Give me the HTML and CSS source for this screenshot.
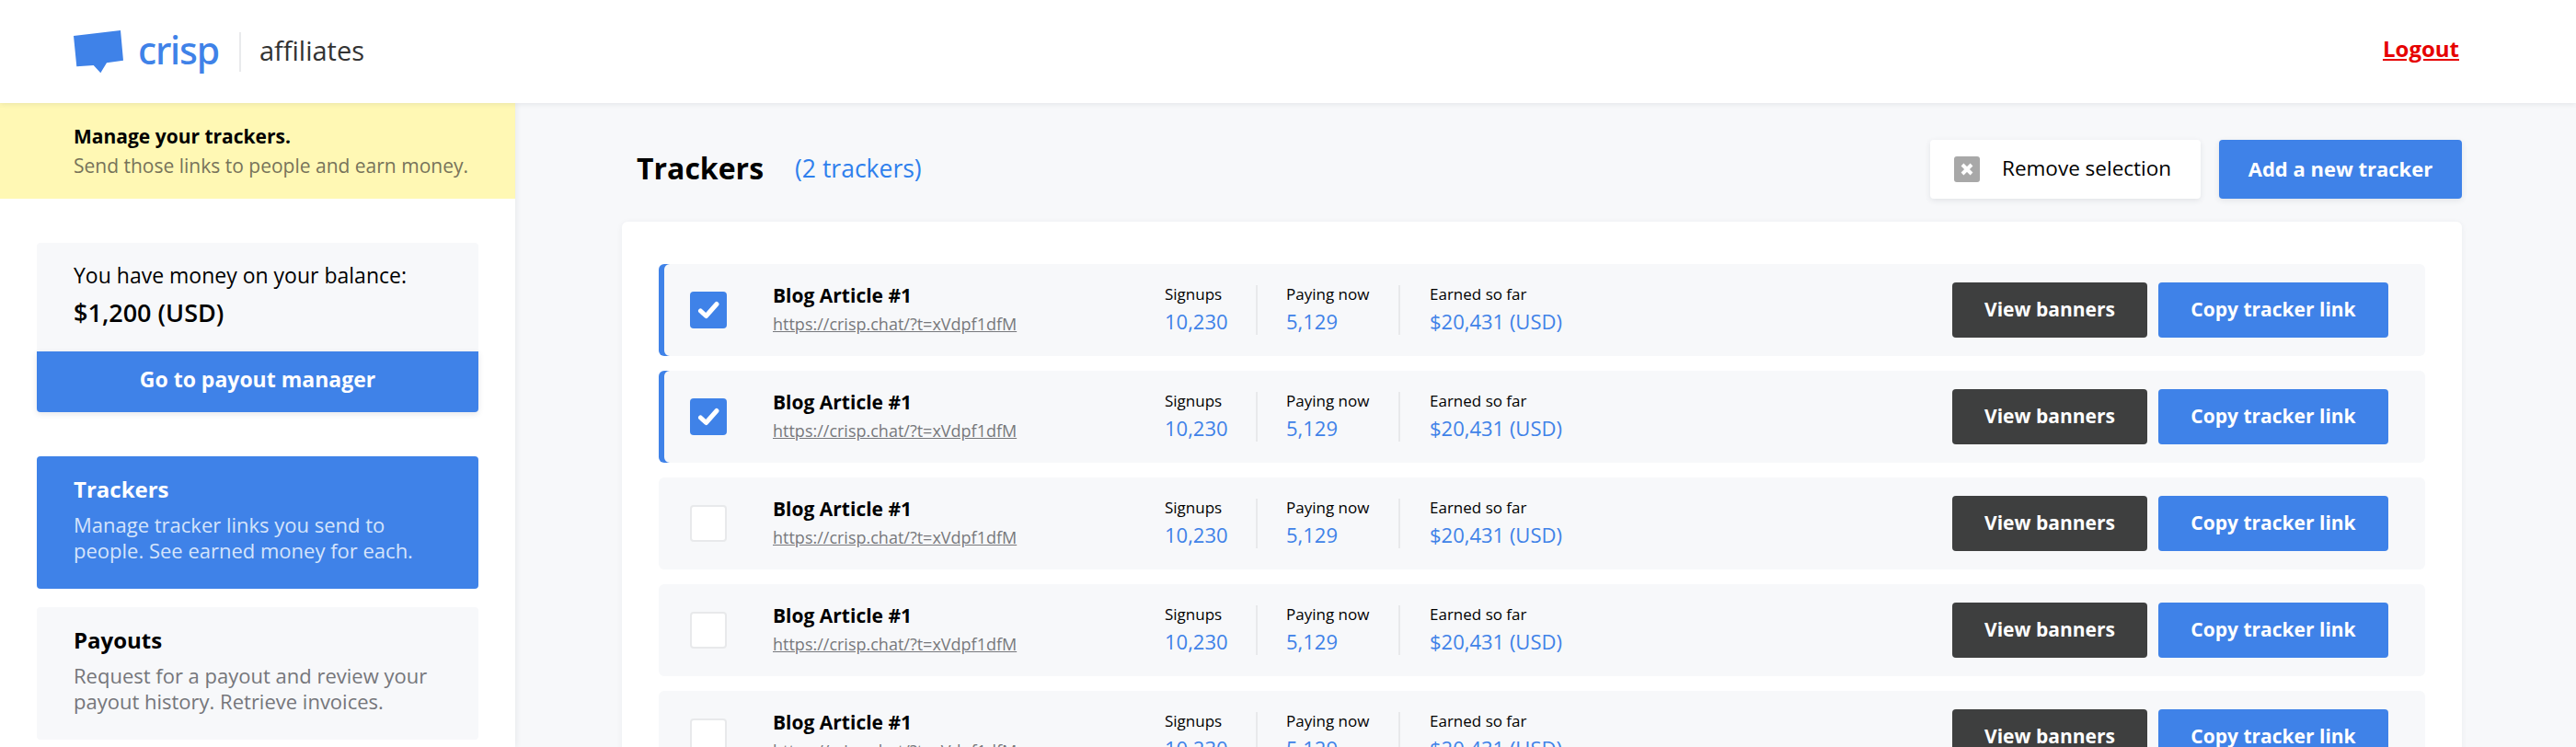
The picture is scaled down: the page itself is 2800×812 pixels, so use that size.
FILE: index.html
```html
<!DOCTYPE html>
<html lang="en">
<head>
<meta charset="utf-8">
<title>Crisp affiliates</title>
<link rel="stylesheet" href="styles.css">
</head>
<body>
<header class="topbar">
  <svg class="logo-mark" viewBox="0 0 54 48" aria-hidden="true"><path d="M0 7 51 1 54 33.7 36 36.300 29.300 47.300 21.700 39 3.300 40.300Z"/></svg>
  <span class="logo-word">crisp</span>
  <span class="logo-sep"></span>
  <span class="logo-sub">affiliates</span>
  <a class="logout" href="#">Logout</a>
</header>
<div class="layout">
  <aside class="sidebar">
    <div class="notice">
      <p class="notice-title">Manage your trackers.</p>
      <p class="notice-text">Send those links to people and earn money.</p>
    </div>
    <div class="side-body">
      <div class="balance">
        <p class="balance-label">You have money on your balance:</p>
        <p class="balance-value">$1,200 (USD)</p>
      </div>
      <a class="balance-btn" href="#">Go to payout manager</a>
      <nav class="side-nav">
        <a class="nav-item active" href="#">
          <span class="nav-title">Trackers</span>
          <span class="nav-text">Manage tracker links you send to people. See earned money for each.</span>
        </a>
        <a class="nav-item" href="#">
          <span class="nav-title">Payouts</span>
          <span class="nav-text">Request for a payout and review your payout history. Retrieve invoices.</span>
        </a>
      </nav>
    </div>
  </aside>
  <main class="main">
    <div class="page-head">
      <h1 class="page-title">Trackers</h1>
      <span class="page-count">(2 trackers)</span>
      <div class="page-actions">
        <button class="btn btn-white"><svg class="x-icon" viewBox="0 0 28 28" aria-hidden="true"><rect width="28" height="28" rx="3"/><path d="M9 9 19 19M19 9 9 19"/></svg>Remove selection</button>
        <button class="btn btn-blue btn-add">Add a new tracker</button>
      </div>
    </div>
    <section class="panel">
      <article class="row selected">
        <span class="check on"><svg viewBox="0 0 40 40" aria-hidden="true"><path d="M11.500 21 17.500 26.500 29 13.500"/></svg></span>
        <div class="name"><div class="name-title">Blog Article #1</div><a class="name-link" href="#">https://crisp.chat/?t=xVdpf1dfM</a></div>
        <div class="stat s1"><div class="stat-label">Signups</div><div class="stat-value">10,230</div></div>
        <div class="stat s2"><div class="stat-label">Paying now</div><div class="stat-value">5,129</div></div>
        <div class="stat s3"><div class="stat-label">Earned so far</div><div class="stat-value">$20,431 (USD)</div></div>
        <div class="actions"><button class="btn btn-dark">View banners</button><button class="btn btn-blue btn-copy">Copy tracker link</button></div>
      </article>
      <article class="row selected">
        <span class="check on"><svg viewBox="0 0 40 40" aria-hidden="true"><path d="M11.500 21 17.500 26.500 29 13.500"/></svg></span>
        <div class="name"><div class="name-title">Blog Article #1</div><a class="name-link" href="#">https://crisp.chat/?t=xVdpf1dfM</a></div>
        <div class="stat s1"><div class="stat-label">Signups</div><div class="stat-value">10,230</div></div>
        <div class="stat s2"><div class="stat-label">Paying now</div><div class="stat-value">5,129</div></div>
        <div class="stat s3"><div class="stat-label">Earned so far</div><div class="stat-value">$20,431 (USD)</div></div>
        <div class="actions"><button class="btn btn-dark">View banners</button><button class="btn btn-blue btn-copy">Copy tracker link</button></div>
      </article>
      <article class="row">
        <span class="check"></span>
        <div class="name"><div class="name-title">Blog Article #1</div><a class="name-link" href="#">https://crisp.chat/?t=xVdpf1dfM</a></div>
        <div class="stat s1"><div class="stat-label">Signups</div><div class="stat-value">10,230</div></div>
        <div class="stat s2"><div class="stat-label">Paying now</div><div class="stat-value">5,129</div></div>
        <div class="stat s3"><div class="stat-label">Earned so far</div><div class="stat-value">$20,431 (USD)</div></div>
        <div class="actions"><button class="btn btn-dark">View banners</button><button class="btn btn-blue btn-copy">Copy tracker link</button></div>
      </article>
      <article class="row">
        <span class="check"></span>
        <div class="name"><div class="name-title">Blog Article #1</div><a class="name-link" href="#">https://crisp.chat/?t=xVdpf1dfM</a></div>
        <div class="stat s1"><div class="stat-label">Signups</div><div class="stat-value">10,230</div></div>
        <div class="stat s2"><div class="stat-label">Paying now</div><div class="stat-value">5,129</div></div>
        <div class="stat s3"><div class="stat-label">Earned so far</div><div class="stat-value">$20,431 (USD)</div></div>
        <div class="actions"><button class="btn btn-dark">View banners</button><button class="btn btn-blue btn-copy">Copy tracker link</button></div>
      </article>
      <article class="row">
        <span class="check"></span>
        <div class="name"><div class="name-title">Blog Article #1</div><a class="name-link" href="#">https://crisp.chat/?t=xVdpf1dfM</a></div>
        <div class="stat s1"><div class="stat-label">Signups</div><div class="stat-value">10,230</div></div>
        <div class="stat s2"><div class="stat-label">Paying now</div><div class="stat-value">5,129</div></div>
        <div class="stat s3"><div class="stat-label">Earned so far</div><div class="stat-value">$20,431 (USD)</div></div>
        <div class="actions"><button class="btn btn-dark">View banners</button><button class="btn btn-blue btn-copy">Copy tracker link</button></div>
      </article>
    </section>
  </main>
</div>
</body>
</html>
```
FILE: styles.css
```css
* { box-sizing: border-box; }
html, body { margin: 0; height: 812px; overflow: hidden; }
body { font-family: "Open Sans", "Noto Sans", sans-serif; background: #f7f8fa; color: #000; }
p, h1 { margin: 0; }
a { color: inherit; text-decoration: none; }

.topbar { position: relative; z-index: 2; height: 112px; background: #fff; display: flex; align-items: center; padding: 0 127px 0 80px; box-shadow: 0 1px 6px rgba(40, 50, 70, .1); }
.logo-mark { flex: none; width: 54px; height: 48px; fill: #3f82e8; }
.logo-word { font-family: "Noto Sans", sans-serif; font-size: 41px; line-height: 56px; font-weight: 500; color: #3f82e8; margin-left: 16px; letter-spacing: -1.200px; margin-top: -4px; }
.logo-sep { width: 2px; height: 43px; background: #e9eaec; margin-left: 22px; }
.logo-sub { font-size: 29px; line-height: 36px; font-weight: 500; color: #333; margin-left: 20px; margin-top: -2px; }
.logout { margin-left: auto; font-size: 24px; line-height: 28px; font-weight: 700; color: #e60000; text-decoration: underline; margin-top: -6px; }

.layout { display: flex; height: 700px; }
.sidebar { position: relative; z-index: 1; flex: 0 0 560px; background: #fff; box-shadow: 1px 0 6px rgba(40, 50, 70, .08); }
.notice { height: 104px; background: #fff8b4; padding: 22px 0 0 80px; }
.notice-title { font-size: 21px; line-height: 28px; font-weight: 700; }
.notice-text { font-size: 21px; line-height: 28px; margin-top: 4px; color: #77735a; }

.side-body { padding: 48px 40px 0; }
.balance { height: 118px; background: #f7f8fa; border-radius: 4px 4px 0 0; padding: 23px 0 0 40px; }
.balance-label { font-size: 23px; line-height: 24px; }
.balance-value { font-size: 27px; line-height: 32px; font-weight: 600; margin-top: 13px; }
.balance-btn { display: block; height: 66px; background: #3f82e8; color: #fff; border-radius: 0 0 4px 4px; text-align: center; font-size: 23px; line-height: 60px; font-weight: 700; box-shadow: 0 2px 6px rgba(40, 50, 70, .12); }

.side-nav { display: flex; flex-direction: column; gap: 20px; margin-top: 48px; }
.nav-item { display: block; height: 144px; padding: 21px 40px 0 40px; border-radius: 4px; background: #f7f8fa; }
.nav-item.active { background: #3f82e8; color: #fff; }
.nav-title { display: block; font-size: 24px; line-height: 30px; font-weight: 700; }
.nav-text { display: block; font-size: 22px; line-height: 28px; margin-top: 9px; color: #75767a; }
.active .nav-text { color: #d5e4fb; }

.main { flex: 1; padding: 40px 124px 0 116px; min-width: 0; overflow: hidden; }
.page-head { display: flex; align-items: center; height: 64px; padding-left: 16px; margin-bottom: 25px; }
.page-title { font-size: 32px; line-height: 40px; font-weight: 700; margin-top: -3px; }
.page-count { font-size: 26.500px; line-height: 36px; color: #2f80ed; margin-left: 34px; margin-top: -2px; }
.page-actions { display: flex; gap: 20px; margin-left: auto; }

.btn { font-family: inherit; border: 0; border-radius: 4px; padding: 0 0 3px; display: inline-flex; align-items: center; justify-content: center; white-space: nowrap; }
.btn-white { width: 294px; height: 64px; padding: 0 0 3px 26px; justify-content: flex-start; background: #fff; color: #000; font-size: 22.500px; font-weight: 500; box-shadow: 0 2px 6px rgba(40, 50, 70, .1); }
.x-icon { flex: none; width: 28px; height: 28px; margin: 3px 24px 0 0; fill: #a8a8a8; }
.x-icon path { fill: none; stroke: #fff; stroke-width: 4; }
.btn-blue { background: #3f82e8; color: #fff; }
.btn-add { width: 264px; height: 64px; font-size: 22px; font-weight: 700; box-shadow: 0 2px 6px rgba(40, 50, 70, .1); }
.btn-dark { width: 212px; height: 60px; background: #3e3f3f; color: #fff; font-size: 21px; font-weight: 700; }
.btn-copy { width: 250px; height: 60px; font-size: 21px; font-weight: 700; }

.panel { background: #fff; border-radius: 6px 6px 0 0; padding: 46px 40px 0; height: 620px; display: flex; flex-direction: column; gap: 16px; box-shadow: 0 1px 6px rgba(40, 50, 70, .06); }
.row { flex: 0 0 100px; display: flex; align-items: center; border-radius: 6px; background: #f7f8fa; padding: 0 40px 0 34px; }
.row.selected { box-shadow: inset 6px 0 0 #3f82e8; }
.check { flex: 0 0 40px; height: 40px; border-radius: 4px; background: #fff; border: 2px solid #e8e9eb; }
.check.on { background: #3f82e8; border: 0; }
.check svg { display: block; width: 40px; height: 40px; fill: none; stroke: #fff; stroke-width: 5; stroke-linecap: round; stroke-linejoin: round; }
.name { flex: 0 0 426px; margin-left: 50px; margin-top: -3px; }
.name-title { font-size: 21px; line-height: 26px; font-weight: 700; }
.name-link { display: inline-block; font-size: 18px; line-height: 22px; margin-top: 7px; color: #77787c; text-decoration: underline; }
.stat { height: 54px; }
.s1 { flex: 0 0 101px; border-right: 2px solid #e8e9eb; }
.s2 { flex: 0 0 155px; padding-left: 31px; border-right: 2px solid #e8e9eb; }
.s3 { padding-left: 32px; }
.stat-label { font-size: 17px; line-height: 20px; }
.stat-value { font-size: 22px; line-height: 28px; margin-top: 5px; color: #3f82e8; }
.actions { margin-left: auto; display: flex; gap: 12px; }
```
